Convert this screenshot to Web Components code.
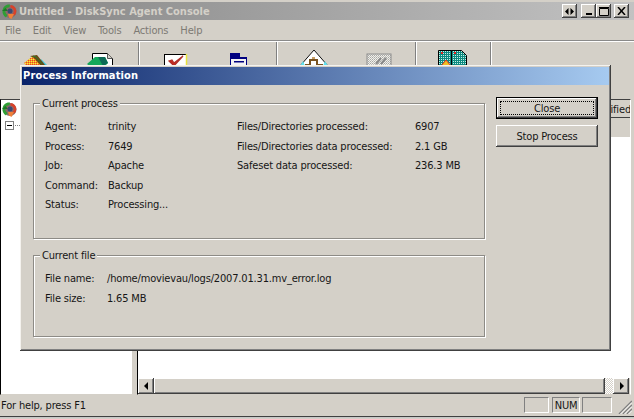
<!DOCTYPE html>
<html>
<head>
<meta charset="utf-8">
<title>DiskSync Agent Console</title>
<style>
  html, body { margin: 0; padding: 0; width: 634px; height: 419px; overflow: hidden; background: #d4d0c8; }
  body { font: 11px "DejaVu Sans Condensed", "Liberation Sans", Arial, sans-serif; color: #161616; letter-spacing: -.17px; }
</style>
</head>
<body>
<ds-console></ds-console>

<script>
// Small swirl logo, used in the window title and at the root of the tree
const LOGO = `
  <svg width="17" height="17" viewBox="0 0 17 17">
    <circle cx="9" cy="8.5" r="6.5" fill="#8a6a6a"/>
    <path d="M9 1.500C5 1 2 3.500 1.500 7.500c-.3 3 1 5.500 3.500 7l1.500-2.500C4.800 10.800 4 9 4.500 7c.5-1.800 2-2.800 4-2.800z" fill="#2f9e35"/>
    <path d="M1 8l3.500-3L7 8z" fill="#1c7a26"/>
    <path d="M9.500 2c3 .2 5.500 2.500 5.800 5.500.2 2.200-.6 4-2.300 5.300l-1.500-1.800c1.200-1 1.500-2.300 1.200-3.700-.4-1.500-1.600-2.300-3.200-2.500z" fill="#d8412a"/>
    <path d="M7 11h6l-2.500 5L8 14.500z" fill="#f0803a"/>
    <circle cx="9" cy="8" r="2.500" fill="#3c4a72"/>
  </svg>`;

const RAISED = 'box-shadow: inset -1px -1px #404040, inset 1px 1px #fff, inset -2px -2px #808080, inset 2px 2px #d4d0c8;';

// Title bar caption button
class CaptionButton extends HTMLElement {
  constructor() {
    super();
    this.attachShadow({mode: 'open'});
    this.shadowRoot.innerHTML = `
      <style>
        :host { display: flex; width: 15px; height: 14px; background: #d4d0c8; align-items: center; justify-content: center; ${RAISED} }
      </style>
      <slot></slot>`;
  }
}
customElements.define('caption-button', CaptionButton);

class TitleBar extends HTMLElement {
  constructor() {
    super();
    this.attachShadow({mode: 'open'});
    this.shadowRoot.innerHTML = `
      <style>
        :host { display: flex; align-items: center; height: 18px; margin-top: 2px; padding: 0 5px 0 1px;
                background: linear-gradient(to right, #868686, #c2c2c2); }
        svg { display: block; }
        .text { margin-left: 1px; font: bold 11px "DejaVu Sans Condensed", "DejaVu Sans", sans-serif; letter-spacing: 0; color: #d4d0c8; white-space: nowrap; flex: 1; }
        .btns { display: flex; }
        caption-button:nth-child(1) { margin-right: 4px; }
        caption-button:nth-child(3) { margin-right: 3px; }
      </style>
      ${LOGO}
      <span class="text"><slot></slot></span>
      <div class="btns">
        <caption-button><svg width="9" height="7" viewBox="0 0 9 7"><path d="M3.500 0v7L0 3.500zM5.500 0v7L9 3.500z" fill="#000"/></svg></caption-button>
        <caption-button><svg width="8" height="8" viewBox="0 0 8 8"><path d="M1 6h6v2H1z" fill="#000"/></svg></caption-button>
        <caption-button><svg width="10" height="9" viewBox="0 0 10 9"><path d="M.500 1.500h9v7h-9zM0 .500h10" fill="none" stroke="#000"/></svg></caption-button>
        <caption-button><svg width="9" height="8" viewBox="0 0 9 8"><path d="M1 0l7 8M8 0L1 8" fill="none" stroke="#000" stroke-width="1.500"/></svg></caption-button>
      </div>`;
  }
}
customElements.define('title-bar', TitleBar);

class MenuBar extends HTMLElement {
  constructor() {
    super();
    this.attachShadow({mode: 'open'});
    this.shadowRoot.innerHTML = `
      <style>
        :host { display: flex; align-items: center; height: 20px; padding-left: 5px; gap: 12px;
                color: #7d7a74; border-bottom: 1px solid #8a8a8a; }
      </style>
      <slot></slot>`;
  }
}
customElements.define('menu-bar', MenuBar);

class ToolBar extends HTMLElement {
  constructor() {
    super();
    this.attachShadow({mode: 'open'});
    this.shadowRoot.innerHTML = `
      <style>
        :host { display: flex; height: 58px; padding-left: 3px; border-top: 1px solid #fff; box-sizing: border-box; }
      </style>
      <slot></slot>`;
  }
}
customElements.define('tool-bar', ToolBar);

// One toolbar button, the picture comes through the slot
class ToolButton extends HTMLElement {
  constructor() {
    super();
    this.attachShadow({mode: 'open'});
    this.shadowRoot.innerHTML = `
      <style>
        :host { display: flex; justify-content: center; width: 65px; padding-top: 7px; box-sizing: border-box; }
      </style>
      <slot></slot>`;
  }
}
customElements.define('tool-button', ToolButton);

class ToolSep extends HTMLElement {
  constructor() {
    super();
    this.attachShadow({mode: 'open'});
    this.shadowRoot.innerHTML = `
      <style>
        :host { display: block; margin-top: 5px; border-left: 1px solid #808080; border-right: 1px solid #fff; width: 0; }
      </style>`;
  }
}
customElements.define('tool-sep', ToolSep);

class TreePane extends HTMLElement {
  constructor() {
    super();
    this.attachShadow({mode: 'open'});
    this.shadowRoot.innerHTML = `
      <style>
        :host { display: block; width: 133px; box-sizing: border-box; background: #fff;
                border-left: 1px solid #000; border-top: 1px solid #404040;
                border-right: 1px solid #d4d0c8; border-bottom: 1px solid #d4d0c8; }
        .root { display: flex; height: 19px; padding-top: 1px; box-sizing: border-box; }
        .node { display: flex; align-items: center; padding: 2px 0 0 4px; }
        .box { width: 9px; height: 9px; box-sizing: border-box; border: 1px solid #808080; display: flex; align-items: center; justify-content: center; }
        .box i { display: block; width: 5px; height: 1px; background: #000; }
        .dots { width: 5px; margin-left: 1px; border-top: 1px dotted #808080; }
      </style>
      <div class="root">${LOGO}</div>
      <div class="node"><span class="box"><i></i></span><span class="dots"></span></div>`;
  }
}
customElements.define('tree-pane', TreePane);

class HScrollbar extends HTMLElement {
  constructor() {
    super();
    this.attachShadow({mode: 'open'});
    this.shadowRoot.innerHTML = `
      <style>
        :host { display: flex; height: 16px; margin-right: 1px; }
        .btn { width: 16px; display: flex; align-items: center; justify-content: center; background: #d4d0c8; ${RAISED} }
        .thumb { flex: 1; background: #d4d0c8; ${RAISED} }
        .track { width: 8px; background: conic-gradient(#fff 25%, #d4d0c8 0 50%, #fff 0 75%, #d4d0c8 0) 0 0 / 2px 2px; }
      </style>
      <div class="btn"><svg width="5" height="8" viewBox="0 0 5 8"><path d="M4 0v8L0 4z" fill="#000"/></svg></div>
      <div class="thumb"></div>
      <div class="track"></div>
      <div class="btn"><svg width="5" height="8" viewBox="0 0 5 8"><path d="M1 0v8l4-4z" fill="#000"/></svg></div>`;
  }
}
customElements.define('h-scrollbar', HScrollbar);

class ListPane extends HTMLElement {
  constructor() {
    super();
    this.attachShadow({mode: 'open'});
    this.shadowRoot.innerHTML = `
      <style>
        :host { display: flex; flex-direction: column; flex: 1; box-sizing: border-box;
                border-left: 1px solid #000; border-top: 1px solid #404040;
                border-right: 1px solid #fff; border-bottom: 1px solid #d4d0c8; }
        .head { display: flex; justify-content: flex-end; height: 18px; padding-top: 3px; box-sizing: border-box; background: #d4d0c8;
                border-bottom: 1px solid #404040; line-height: 14px; overflow: hidden; white-space: nowrap; }
        .head span { margin-right: -1px; }
        .band { height: 19px; background: #d4d0c8; }
        .body { flex: 1; background: #fff; }
      </style>
      <div class="head"><span><slot></slot></span></div>
      <div class="band"></div>
      <div class="body"></div>
      <h-scrollbar></h-scrollbar>`;
  }
}
customElements.define('list-pane', ListPane);

class StatusBar extends HTMLElement {
  constructor() {
    super();
    this.attachShadow({mode: 'open'});
    this.shadowRoot.innerHTML = `
      <style>
        :host { display: flex; align-items: center; height: 20px; padding-left: 1px; }
        .msg { flex: 1; padding-top: 1px; }
        svg { margin: 3px 2px 0 6px; display: block; }
      </style>
      <span class="msg"><slot></slot></span>
      <slot name="panes"></slot>
      <svg width="14" height="14" viewBox="0 0 14 14">
        <path d="M1 14L14 1M5 14l9-9M9 14l5-5" stroke="#808080" stroke-width="1.500"/>
        <path d="M2.500 14L14 2.500M6.500 14L14 6.500M10.500 14l3.500-3.500" stroke="#fff"/>
      </svg>`;
  }
}
customElements.define('status-bar', StatusBar);

class StatusPane extends HTMLElement {
  constructor() {
    super();
    this.attachShadow({mode: 'open'});
    this.shadowRoot.innerHTML = `
      <style>
        :host { display: flex; align-items: center; justify-content: center; box-sizing: border-box; height: 16px;
                margin-left: 2px; border: 1px solid; border-color: #808080 #fff #fff #808080; }
      </style>
      <slot></slot>`;
  }
}
customElements.define('status-pane', StatusPane);

// Dialog window, lies over the console
class DsDialog extends HTMLElement {
  constructor() {
    super();
    this.attachShadow({mode: 'open'});
    this.shadowRoot.innerHTML = `
      <style>
        :host { position: absolute; left: 20px; top: 65px; width: 591px; height: 286px; box-sizing: border-box; padding: 2px; background: #d4d0c8;
                box-shadow: inset -1px -1px #404040, inset 1px 1px #f4f2ee, inset -2px -2px #808080; }
        .title { height: 18px; padding-left: 1px; background: linear-gradient(to right, #0a246a, #a6caf0);
                 color: #fff; font: bold 11px/18px "DejaVu Sans Condensed", "DejaVu Sans", sans-serif; letter-spacing: .15px; white-space: nowrap; }
        .body { display: flex; padding: 12px 0 0 11px; gap: 11px; }
        .groups { display: flex; flex-direction: column; width: 452px; gap: 16px; padding-top: 6px; }
        .btns { display: flex; flex-direction: column; width: 102px; gap: 6px; }
      </style>
      <div class="title"><slot name="title"></slot></div>
      <div class="body">
        <div class="groups"><slot></slot></div>
        <div class="btns"><slot name="buttons"></slot></div>
      </div>`;
  }
}
customElements.define('ds-dialog', DsDialog);

class GroupBox extends HTMLElement {
  constructor() {
    super();
    this.attachShadow({mode: 'open'});
    this.shadowRoot.innerHTML = `
      <style>
        :host { display: block; box-sizing: border-box; height: var(--h); border: 1px solid #8d8b86; box-shadow: 1px 1px #fff, inset 1px 1px #fff; }
        .inner { display: flex; padding: 13px 0 0 11px; }
        .legend { position: absolute; margin: -7px 0 0 6px; padding: 0 2px; background: #d4d0c8; line-height: 14px; }
      </style>
      <div class="legend"></div>
      <div class="inner"><slot></slot></div>`;
  }
  connectedCallback() {
    this.shadowRoot.querySelector('.legend').textContent = this.getAttribute('legend');
  }
}
customElements.define('group-box', GroupBox);

class InfoList extends HTMLElement {
  constructor() {
    super();
    this.attachShadow({mode: 'open'});
    this.shadowRoot.innerHTML = `
      <style>
        :host { display: block; width: var(--w, auto); }
      </style>
      <slot></slot>`;
  }
}
customElements.define('info-list', InfoList);

class InfoRow extends HTMLElement {
  constructor() {
    super();
    this.attachShadow({mode: 'open'});
    this.shadowRoot.innerHTML = `
      <style>
        :host { display: grid; grid-template-columns: var(--label, 63px) auto; line-height: 19.500px; white-space: nowrap; }
      </style>
      <span id="label"></span>
      <span><slot></slot></span>`;
  }
  connectedCallback() {
    this.shadowRoot.getElementById('label').textContent = this.getAttribute('label');
  }
}
customElements.define('info-row', InfoRow);

class WinButton extends HTMLElement {
  constructor() {
    super();
    this.attachShadow({mode: 'open'});
    this.shadowRoot.innerHTML = `
      <style>
        :host { display: flex; height: 22px; align-items: center; justify-content: center; box-sizing: border-box; position: relative;
                background: #d4d0c8; ${RAISED} }
        :host([default]) { border: 1px solid #000; }
        :host([default]) .focus { display: block; }
        .focus { display: none; position: absolute; inset: 3px; border: 1px dotted #000; }
      </style>
      <span class="focus"></span>
      <slot></slot>`;
  }
}
customElements.define('win-button', WinButton);

// Whole console window
class DsConsole extends HTMLElement {
  constructor() {
    super();
    this.attachShadow({mode: 'open'});
    this.shadowRoot.innerHTML = `
      <style>
        :host { display: flex; flex-direction: column; position: relative; width: 634px; height: 419px; overflow: hidden; background: #d4d0c8; }
        .split { display: flex; height: 296px; margin-right: 3px; }
        .splitter { width: 4px; }
        .bottom { height: 2px; margin-top: 1px; background: linear-gradient(#404040 50%, #c8c8c8 50%); }
        .m138 { margin: 0 3px 0 5px; } .m276 { margin: 0 3px 0 3px; } .m415 { margin: 0 2px 0 4px; } .m490 { margin: 0 0 0 6px; }
        svg { display: block; }
      </style>
      <title-bar>Untitled - DiskSync Agent Console</title-bar>
      <menu-bar><span>File</span><span>Edit</span><span>View</span><span>Tools</span><span>Actions</span><span>Help</span></menu-bar>
      <tool-bar>
        <tool-button>
          <svg width="33" height="28" viewBox="0 0 33 28">
            <defs><pattern id="chk" width="2" height="2" patternUnits="userSpaceOnUse"><rect width="2" height="2" fill="#f7a11c"/><rect width="1" height="1" fill="#f3e84a"/><rect x="1" y="1" width="1" height="1" fill="#e8402a"/></pattern></defs>
            <path d="M22 10l8 8-6 6-6-8z" fill="#3fc7d9"/>
            <path d="M5 14l9-7 9 8-9 10z" fill="url(#chk)"/>
            <path d="M11 7l7-1 8 10-3 2-8-9z" fill="#6a4a14"/>
            <path d="M14 7l3 1 6 7" stroke="#2d7a2a" fill="none"/>
          </svg>
        </tool-button>
        <tool-button>
          <svg width="33" height="28" viewBox="0 0 33 28">
            <path d="M8.500 4.500h15l5 5v16h-20z" fill="#fff" stroke="#000"/>
            <path d="M23.500 4.500v5h5" fill="#d4d0c8" stroke="#555"/>
            <path d="M3 15l8-7h10l3 6-10 10z" fill="#14a85a"/>
            <path d="M14 8h7l3 6-5 3z" fill="#0d6a56"/>
          </svg>
        </tool-button>
        <tool-sep class="m138"></tool-sep>
        <tool-button>
          <svg width="33" height="28" viewBox="0 0 33 28">
            <rect x="5.500" y="5.500" width="22" height="20" fill="#fff" stroke="#000"/>
            <path d="M27.500 5v21" stroke="#e8e23c" stroke-width="1.500"/>
            <path d="M10 12l5 5 9-10-9 7-2-3z" fill="#c8281e" stroke="#b0302a" stroke-width="1.200"/>
          </svg>
        </tool-button>
        <tool-button>
          <svg width="33" height="28" viewBox="0 0 33 28">
            <path d="M6 4h10v4H6z" fill="#000080"/>
            <rect x="6.500" y="8.500" width="16" height="18" fill="#f2f2f2" stroke="#000080"/>
            <path d="M6 8h17v2H6zM10 12h10v1.500H10zM7 16h15v2H7z" fill="#000080"/>
          </svg>
        </tool-button>
        <tool-sep class="m276"></tool-sep>
        <tool-button>
          <svg width="33" height="28" viewBox="0 0 33 28">
            <path d="M17 1L31 17H3z" fill="#fff" stroke="#111" stroke-width="1"/>
            <path d="M28 12l3 5h-5zM6 12l-3 5h5z" fill="#5fe0ee"/>
            <path d="M13 17v-6h7v6" fill="none" stroke="#7a5320" stroke-width="2"/>
            <path d="M15 8h3v2h-3z" fill="#c9a26a"/>
            <path d="M8 16h5M20 16h6" stroke="#7a5320" stroke-width="2"/>
          </svg>
        </tool-button>
        <tool-button>
          <svg width="33" height="28" viewBox="0 0 33 28">
            <defs><pattern id="gry" width="2" height="2" patternUnits="userSpaceOnUse"><rect width="2" height="2" fill="#f0efeb"/><rect width="1" height="1" fill="#a8a8a4"/><rect x="1" y="1" width="1" height="1" fill="#c0c0bc"/></pattern></defs>
            <rect x="5" y="5" width="24" height="22" fill="url(#gry)" stroke="#8c8c8c"/>
            <path d="M14 15l5-6M19 15l5-6" stroke="#8a8a8a" stroke-width="2"/>
          </svg>
        </tool-button>
        <tool-sep class="m415"></tool-sep>
        <tool-button>
          <svg width="33" height="28" viewBox="0 0 33 28">
            <defs><pattern id="teal" width="2" height="2" patternUnits="userSpaceOnUse"><rect width="2" height="2" fill="#0d8a80"/><rect width="1" height="1" fill="#c6f0e8"/></pattern></defs>
            <path d="M3.500 1.500h13v24h-13z" fill="url(#teal)" stroke="#000"/>
            <path d="M16.500 1.500h10l5 5v19h-15z" fill="url(#teal)" stroke="#000"/>
            <rect x="6" y="3" width="2" height="2" fill="#e0201c"/>
            <rect x="19" y="3" width="2" height="2" fill="#e0201c"/>
            <path d="M6 17l5-6 5 6z" fill="#f0c020" stroke="#e03020"/>
          </svg>
        </tool-button>
        <tool-sep class="m490" style="margin-top:0"></tool-sep>
      </tool-bar>
      <div class="split">
        <tree-pane></tree-pane>
        <div class="splitter"></div>
        <list-pane>ified</list-pane>
      </div>
      <status-bar>For help, press F1
        <status-pane slot="panes" style="width:25px"></status-pane>
        <status-pane slot="panes" style="width:28px;margin-left:3px">NUM</status-pane>
        <status-pane slot="panes" style="width:30px"></status-pane>
      </status-bar>
      <div class="bottom"></div>

      <ds-dialog>
        <span slot="title">Process Information</span>
        <group-box legend="Current process" style="--h:136px">
          <info-list style="--w:192px">
            <info-row label="Agent:">trinity</info-row>
            <info-row label="Process:">7649</info-row>
            <info-row label="Job:">Apache</info-row>
            <info-row label="Command:">Backup</info-row>
            <info-row label="Status:">Processing...</info-row>
          </info-list>
          <info-list style="--label:178px">
            <info-row label="Files/Directories processed:">6907</info-row>
            <info-row label="Files/Directories data processed:">2.1 GB</info-row>
            <info-row label="Safeset data processed:">236.3 MB</info-row>
          </info-list>
        </group-box>
        <group-box legend="Current file" style="--h:82px">
          <info-list style="--label:62px">
            <info-row label="File name:">/home/movievau/logs/2007.01.31.mv_error.log</info-row>
            <info-row label="File size:">1.65 MB</info-row>
          </info-list>
        </group-box>
        <win-button slot="buttons" default>Close</win-button>
        <win-button slot="buttons">Stop Process</win-button>
      </ds-dialog>`;
  }
}
customElements.define('ds-console', DsConsole);
</script>
</body>
</html>
